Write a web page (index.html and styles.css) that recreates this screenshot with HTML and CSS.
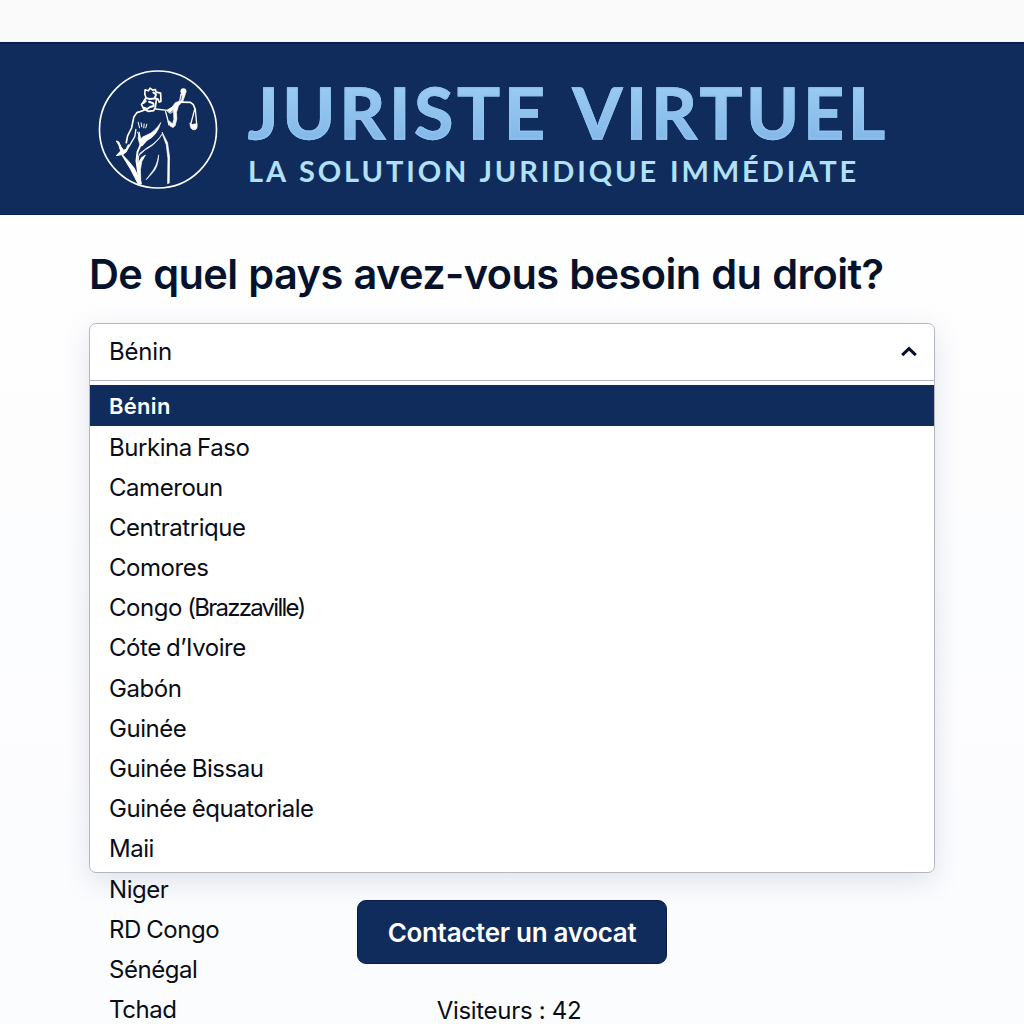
FILE: index.html
```html
<!DOCTYPE html>
<html lang="fr">
<head>
<meta charset="utf-8">
<title>Juriste Virtuel</title>
<link rel="stylesheet" href="styles.css">
</head>
<body>
<header class="banner">
  <svg class="logo" viewBox="24 28 360 360" fill="none" stroke="#fff" stroke-linecap="round" stroke-linejoin="round">
    <circle cx="204" cy="208" r="177" stroke-width="5"/>
    <!-- head, crown and blindfold -->
    <path stroke-width="5" d="M164 101l1-13 10 3 5-8 8 6 8-2 2 8 14 3 1 25-5 2-4-9-9-2M164 101l4 11-8 12-6 8 6 13 14 8 17-2 5-10 3-22"/>
    <path stroke-width="6" d="M167 113l13 3 13-2 5-10M160 128l7-6M177 124l13 5 1 8-11 3-9 6-10-4M190 96l7 5"/>
    <!-- shoulders and left arm -->
    <path stroke-width="5" d="M162 150l-22 7-9 13-7 34-12 23-4 21"/>
    <path stroke-width="4" d="M137 208l-3 21-18 31-19 24"/>
    <path stroke-width="4" d="M197 146l35 4 18-11"/>
    <!-- raised arm -->
    <path fill="#fff" stroke-width="2" d="M233 152l14-12 9-13 13-5 4-22 14 0-8 23-13 13-6 20 1 20-5 20-6 6-9-4-7-14 4-2 10 9 4-14-1-24-10 7z"/>
    <path stroke-width="4" d="M227 154l7 26 3 14"/>
    <circle cx="281" cy="92" r="9" fill="#fff" stroke="none"/>
    <path stroke="#102c5c" stroke-width="2" d="M276 106l-3 14M239 160l10-9"/>
    <!-- scales -->
    <path stroke-width="5" d="M275 125l27 1 9 7 6 15"/>
    <path stroke-width="4" d="M315 147l-12 45M317 147l4 45"/>
    <path fill="#fff" stroke-width="2" d="M301 190l6 3 15-3q3 19-9 19t-12-19z"/>
    <!-- bodice folds -->
    <path stroke-width="3" d="M144 186l4 17M153 188l2 12M162 191l-1 12M170 192l-3 11M142 216l6 12"/>
    <path fill="#fff" stroke-width="2" d="M212 188q-20 29-42 37-14 5-18 11l-5-21-3 20 6 22 6 1 15-17q31-15 41-53z"/>
    <!-- skirt -->
    <path stroke-width="6" d="M151 255l-9 21-3 27 5 35 8 34"/>
    <path fill="#fff" stroke-width="2" d="M217 221l-10 15q-17 22-41 33l-20 18-2 22 10-16 12-8-11 20-4 24 1 44-5-9-5-39 1-31 7-15 23-17q27-14 44-41z"/>
    <path fill="#fff" stroke-width="2" d="M217 217l16 31 6 43-1 79-5 2 1-76-5-42-10-27z"/>
    <path fill="#fff" stroke-width="2" d="M206 286q-5 34-24 55l-14 19 17-18q20-18 21-56z"/>
    <!-- sword -->
    <path fill="#fff" stroke-width="3" d="M79 243l6 2 7 15 8 11 8-4 6-13 3 2-9 20-12 8 18 19q21 21 28 43l9 27-8-2-22-43-27-44-16 3 13-14-5-16z"/>
  </svg>
  <div class="brand">
    <div class="brand-name">JURISTE VIRTUEL</div>
    <div class="tagline">LA SOLUTION JURIDIQUE IMMÉDIATE</div>
  </div>
</header>
<main class="content">
  <h1 class="question">De quel pays avez-vous besoin du droit?</h1>
  <div class="select">
    <div class="select-value">
      <span>Bénin</span>
      <svg class="chevron" viewBox="0 0 16 11" fill="none" stroke="#06122b" stroke-width="3"><path d="M1.200 9.200L8 2.600l6.800 6.600"/></svg>
    </div>
    <ul class="options">
      <li class="selected">Bénin</li>
      <li>Burkina Faso</li>
      <li>Cameroun</li>
      <li>Centratrique</li>
      <li>Comores</li>
      <li>Congo <span class="tight">(Brazzaville)</span></li>
      <li>Cóte d’Ivoire</li>
      <li>Gabón</li>
      <li>Guinée</li>
      <li>Guinée Bissau</li>
      <li>Guinée êquatoriale</li>
      <li>Maii</li>
    </ul>
  </div>
  <div class="below">
    <ul class="more">
      <li>Niger</li>
      <li>RD Congo</li>
      <li>Sénégal</li>
      <li>Tchad</li>
    </ul>
    <div class="actions">
      <button class="contact" type="button">Contacter un avocat</button>
      <p class="visitors">Visiteurs : 42</p>
    </div>
  </div>
</main>
</body>
</html>
```
FILE: styles.css
```css
* { box-sizing: border-box; }
html { background: #fafafa; }
body {
  margin: 0;
  height: 1024px;
  padding-top: 42px;
  overflow: hidden;
  display: flex;
  flex-direction: column;
  background: #fafafa;
  color: #0a0d16;
  font-family: Inter, "Liberation Sans", sans-serif;
  font-size: 24px;
}
ul { list-style: none; margin: 0; padding: 0; }
.banner {
  flex: none;
  height: 173px;
  display: flex;
  gap: 30px;
  padding: 26px 0 0 98px;
  background: #102c5c;
  border-top: 2px solid #061d50;
  border-bottom: 1px solid #071c4b;
  font-family: Lato, "Open Sans", sans-serif;
  font-weight: 700;
  white-space: nowrap;
}
.logo { flex: none; width: 120px; height: 119px; }
.brand-name {
  height: 79px;
  font-size: 71px;
  line-height: 83px;
  letter-spacing: 4.1px;
  word-spacing: 5px;
  background: linear-gradient(#9acbf3 20%, #85b9e9 85%);
  background-clip: text;
  color: transparent;
  -webkit-text-stroke: 1.3px #90c4ef;
}
.tagline { font-size: 29px; line-height: 44px; letter-spacing: 2.9px; word-spacing: 1px; color: #b2e0f5; }
.content {
  flex: 1;
  padding: 32px 89px 0;
  background: linear-gradient(#fefefe, #fbfcfe);
}
.question {
  margin: 0;
  height: 76px;
  font-size: 41.5px;
  line-height: 54px;
  font-weight: 600;
  letter-spacing: -0.6px;
  word-spacing: 1px;
  color: #06122b;
  white-space: nowrap;
}
.select {
  height: 550px;
  border: 1px solid #b5b8be;
  border-radius: 7px;
  background: #fff;
  box-shadow: 0 8px 28px rgba(30, 45, 100, .13);
}
.select-value {
  height: 57px;
  padding: 0 17px 2px 19px;
  display: flex;
  align-items: center;
  justify-content: space-between;
  border-bottom: 1px solid #b5b8be;
  letter-spacing: -0.2px;
}
.chevron { width: 16px; height: 11px; }
.options { padding-top: 4px; }
.options li, .more li {
  height: 40.1px;
  line-height: 41px;
  padding-left: 19px;
  letter-spacing: -0.45px;
  word-spacing: -1px;
  white-space: nowrap;
}
.options .selected {
  height: 41px;
  line-height: 43px;
  margin-bottom: 1px;
  background: #102c5c;
  color: #fff;
  font-size: 22px;
  font-weight: 600;
  letter-spacing: 0.3px;
}
.tight { letter-spacing: -1.75px; }
.below { display: grid; grid-template-columns: 268px 310px 268px; }
.more { padding: 0 0 0 1px; margin-top: -4px; }
.actions { padding-top: 27px; text-align: center; }
.contact {
  display: block;
  width: 310px;
  height: 64px;
  padding: 0;
  border: 1px solid #071c4b;
  border-radius: 9px;
  background: #102c5c;
  color: #fff;
  font: 600 26px Inter, "Liberation Sans", sans-serif;
  letter-spacing: -0.3px;
}
.visitors { margin: 34px 0 0; padding-right: 6px; line-height: 26px; letter-spacing: -0.3px; }
```
